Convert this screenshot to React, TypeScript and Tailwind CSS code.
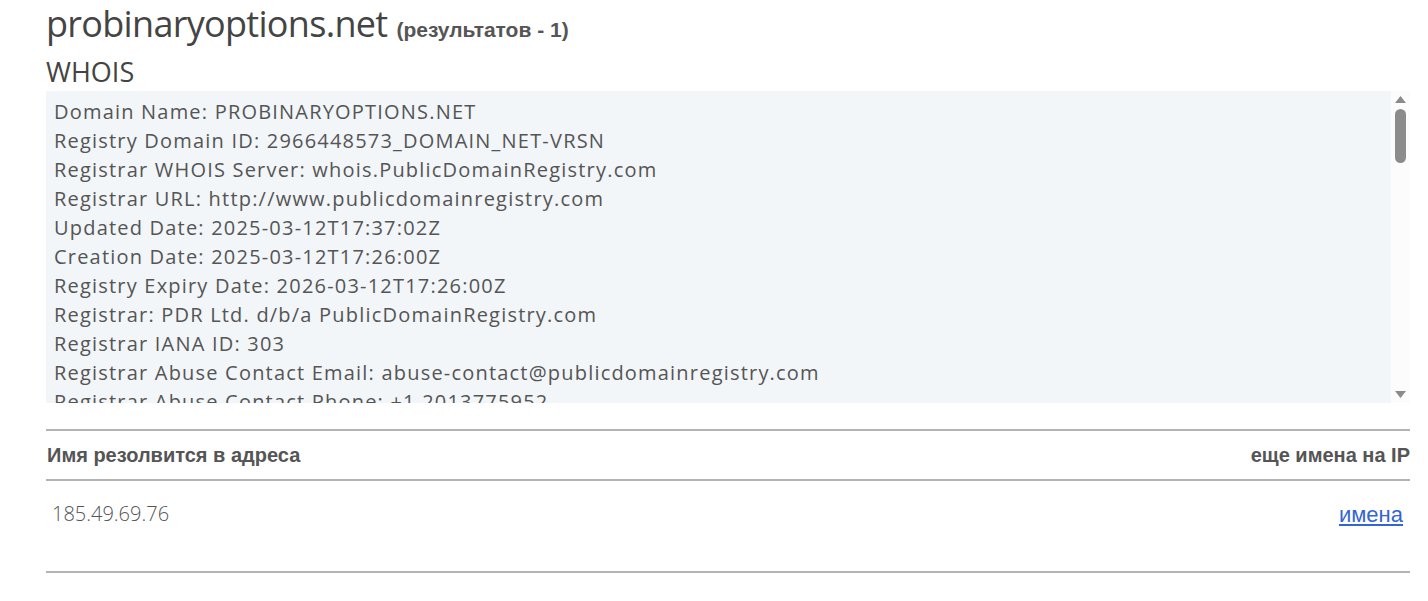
const whoisLines = [
  'Domain Name: PROBINARYOPTIONS.NET',
  'Registry Domain ID: 2966448573_DOMAIN_NET-VRSN',
  'Registrar WHOIS Server: whois.PublicDomainRegistry.com',
  'Registrar URL: http://www.publicdomainregistry.com',
  'Updated Date: 2025-03-12T17:37:02Z',
  'Creation Date: 2025-03-12T17:26:00Z',
  'Registry Expiry Date: 2026-03-12T17:26:00Z',
  'Registrar: PDR Ltd. d/b/a PublicDomainRegistry.com',
  'Registrar IANA ID: 303',
  'Registrar Abuse Contact Email: abuse-contact@publicdomainregistry.com',
  'Registrar Abuse Contact Phone: +1.2013775952',
  'Domain Status: clientTransferProhibited https://icann.org/epp#clientTransferProhibited',
];

function FakeScrollbar() {
  return (
    <div className="flex w-[19px] shrink-0 flex-col items-center bg-[#fcfcfc] py-[5px]">
      <svg width="11" height="7" viewBox="0 0 11 7">
        <path d="M5.5 0 L11 7 L0 7 Z" fill="#8a8a8a" />
      </svg>
      <div className="mt-[6px] h-[54px] w-[11px] rounded-full bg-[#8c8c8c]" />
      <div className="flex-1" />
      <svg width="11" height="7" viewBox="0 0 11 7">
        <path d="M0 0 L11 0 L5.5 7 Z" fill="#8a8a8a" />
      </svg>
    </div>
  );
}

export default function App() {
  return (
    <div className="min-h-screen bg-white">
      <div className="ml-[46px] mr-[18px] pt-[1px]">
        <h1 className="flex items-baseline gap-[9px] text-[#444]">
          <span className="font-['Open_Sans',sans-serif] text-[36px] leading-[46px] tracking-[-0.7px]">
            probinaryoptions.net
          </span>
          <span className="font-['Liberation_Sans',Arial,sans-serif] text-[21px] font-bold text-[#555]">
            (результатов - 1)
          </span>
        </h1>

        <h2 className="mt-[9px] font-['Open_Sans',sans-serif] text-[27px] leading-[32px] text-[#444]">
          WHOIS
        </h2>

        <div className="mt-[3px] flex h-[312px] bg-[#f2f6f9]">
          <div className="flex-1 overflow-hidden px-[8px] pt-[6px] font-['Open_Sans',sans-serif] text-[20px] leading-[29px] tracking-[1.2px] text-[#555]">
            {whoisLines.map((line) => (
              <div key={line} className="whitespace-nowrap">
                {line}
              </div>
            ))}
          </div>
          <FakeScrollbar />
        </div>

        <table className="mt-[26px] w-full border-collapse font-['Liberation_Sans',Arial,sans-serif]">
          <thead>
            <tr className="border-y-2 border-[#b3b3b3]">
              <th className="h-[50px] px-[1px] text-left text-[20px] font-bold text-[#555]">
                Имя резолвится в адреса
              </th>
              <th className="h-[50px] text-right text-[20px] font-bold text-[#555]">
                еще имена на IP
              </th>
            </tr>
          </thead>
          <tbody>
            <tr className="border-b-2 border-[#b3b3b3]">
              <td className="h-[92px] px-[6px] pb-[24px] align-middle font-['Open_Sans',sans-serif] text-[20px] font-light text-[#555]">
                185.49.69.76
              </td>
              <td className="h-[92px] px-[7px] pb-[24px] text-right align-middle text-[22px]">
                <a href="#" className="text-[#3465d4] underline">
                  имена
                </a>
              </td>
            </tr>
          </tbody>
        </table>
      </div>
    </div>
  );
}
